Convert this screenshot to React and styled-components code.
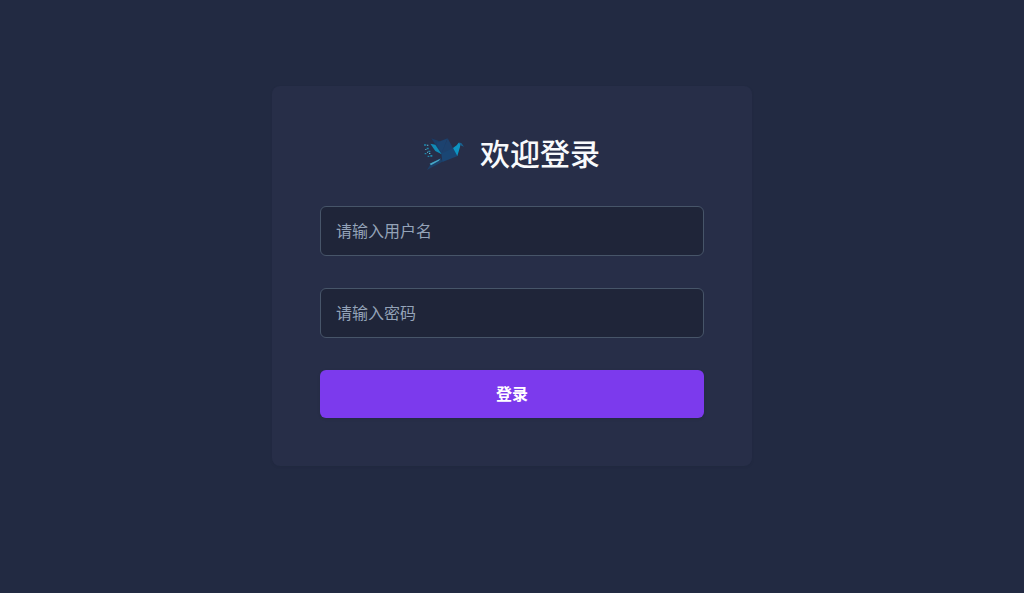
import React from "react";
import styled, { createGlobalStyle } from "styled-components";

const GlobalStyle = createGlobalStyle`
  *, *::before, *::after { box-sizing: border-box; }
  body {
    margin: 0;
    background: #222a42;
    color: #f8fafc;
    font-family: "Noto Sans", "Noto Sans CJK SC", sans-serif;
  }
`;

const Page = styled.main`
  min-height: 100vh;
  display: flex;
  align-items: center;
  justify-content: center;
  padding: 20px 16px 61px;
`;

const Card = styled.section`
  width: 100%;
  max-width: 480px;
  padding: 48px;
  border-radius: 8px;
  background: #272e48;
  box-shadow: 0 1px 3px rgba(15, 23, 42, 0.08);
`;

const Header = styled.header`
  display: flex;
  align-items: flex-start;
  justify-content: center;
  gap: 16px;
  margin-bottom: 32px;
`;

const Logo = styled.svg`
  width: 40px;
  height: 40px;
  flex: none;
`;

const Title = styled.h1`
  margin: 0;
  font-family: "Noto Sans CJK SC", sans-serif;
  font-size: 30px;
  line-height: 36px;
  font-weight: 500;
`;

const Form = styled.form`
  display: flex;
  flex-direction: column;
  gap: 32px;
`;

const Field = styled.input`
  width: 100%;
  height: 50px;
  padding: 0 15px 2px;
  border: 1px solid #475569;
  border-radius: 6px;
  outline: none;
  background: #1f2539;
  color: #f8fafc;
  font-family: "Noto Sans CJK SC", sans-serif;
  font-size: 16px;

  &::placeholder { color: #94a3b8; opacity: 1; }
  &:focus { border-color: #7c3aed; }
`;

const SubmitButton = styled.button`
  height: 48px;
  padding: 0 16px 2px;
  border: 0;
  border-radius: 6px;
  background: #7c3aed;
  color: #fff;
  font-family: "Noto Sans CJK SC", sans-serif;
  font-size: 16px;
  font-weight: 700;
  cursor: pointer;
  box-shadow: 0 1px 3px rgba(15, 23, 42, 0.15);
`;

function BirdLogo() {
  return (
    <Logo viewBox="27 12 120 120" aria-hidden="true">
      <path d="M49 25 L98 43 L79 71 Z" fill="#1b3d67" />
      <path d="M64 38 L98 25 L79 71 Z" fill="#1c426f" />
      <path d="M98 25 L114 54 L128 78 L79 71 Z" fill="#1d416d" />
      <path d="M79 71 L114 54 L128 78 L82 96 Z" fill="#1a4674" />
      <path d="M114 54 L125 46 L131 38 L137 39 L135 51 L127 78 Z" fill="#0d94c3" />
      <path d="M132 38 L139 39 L147 50 L136 46 Z" fill="#19618e" />
      <path d="M46 41 L61 44 L80 73 L61 63 Z" fill="#118bb7" />
      <path d="M36 120 L48 100 L77 84 L82 95 Z" fill="#1c4069" />
      <path d="M44 101 L76 86 L72 92 L48 106 Z" fill="#46a8c7" />
      <path d="M27 43h7v4h-7z M35 53h6v5h-6z M40 62h6v5h-6z M29 69h5v4h-5z M46 75h6v5h-6z M38 77h5v4h-5z" fill="#1d88ad" />
      <path d="M36 44h4v3h-4z M31 57h3v3h-3z M42 69h4v3h-4z M36 65h3v3h-3z" fill="#71bdd0" />
    </Logo>
  );
}

export default function App() {
  return (
    <>
      <GlobalStyle />
      <Page>
        <Card>
          <Header>
            <BirdLogo />
            <Title>欢迎登录</Title>
          </Header>
          <Form onSubmit={(event) => event.preventDefault()}>
            <Field type="text" name="username" aria-label="用户名" placeholder="请输入用户名" autoComplete="username" />
            <Field type="password" name="password" aria-label="密码" placeholder="请输入密码" autoComplete="current-password" />
            <SubmitButton type="submit">登录</SubmitButton>
          </Form>
        </Card>
      </Page>
    </>
  );
}
